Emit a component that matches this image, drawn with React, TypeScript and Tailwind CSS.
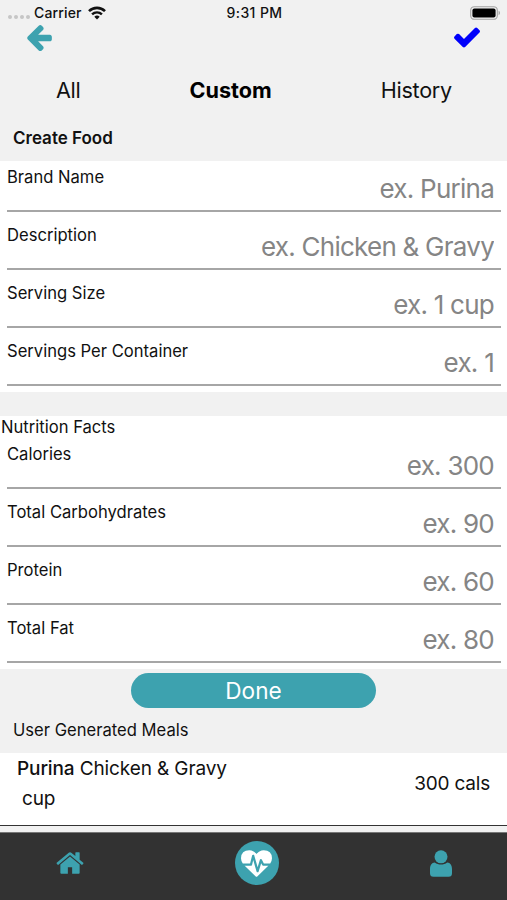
interface Field {
  label: string;
  placeholder: string;
  raised?: boolean;
}

const foodFields: Field[] = [
  { label: "Brand Name", placeholder: "ex. Purina", raised: true },
  { label: "Description", placeholder: "ex. Chicken & Gravy" },
  { label: "Serving Size", placeholder: "ex. 1 cup" },
  { label: "Servings Per Container", placeholder: "ex. 1" },
];

const nutritionFields: Field[] = [
  { label: "Calories", placeholder: "ex. 300", raised: true },
  { label: "Total Carbohydrates", placeholder: "ex. 90" },
  { label: "Protein", placeholder: "ex. 60" },
  { label: "Total Fat", placeholder: "ex. 80" },
];

const icons = {
  arrowLeft:
    "M1664 896v128q0 53-32.5 90.5t-84.5 37.5h-704l293 294q38 36 38 90t-38 90l-75 76q-37 37-90 37-52 0-91-37l-651-652q-37-37-37-90 0-52 37-91l651-650q38-38 91-38 52 0 90 38l75 74q38 38 38 91t-38 91l-293 293h704q52 0 84.5 37.5t32.5 90.5z",
  check:
    "M1671 566q0 40-28 68l-724 724-136 136q-28 28-68 28t-68-28l-136-136-362-362q-28-28-28-68t28-68l136-136q28-28 68-28t68 28l294 295 656-657q28-28 68-28t68 28l136 136q28 28 28 68z",
  home: "M1472 992v480q0 26-19 45t-45 19h-384v-384h-256v384h-384q-26 0-45-19t-19-45v-480q0-1 .5-3t.5-3l575-474 575 474q1 2 1 6zm223-69l-62 74q-8 9-21 11h-3q-13 0-21-7l-692-577-692 577q-12 8-24 7-13-2-21-11l-62-74q-8-10-7-23.5t11-21.5l719-599q32-26 76-26t76 26l244 204v-195q0-14 9-23t23-9h192q14 0 23 9t9 23v408l219 182q10 8 11 21.5t-7 23.5z",
  heartbeat:
    "M1280 1024h305q-5 6-10 10.5t-9 7.5l-3 4-623 600q-18 18-44 18t-44-18l-624-602q-5-2-21-20h369q22 0 39.5-13.5t22.5-34.5l70-281 190 667q6 20 23 33t39 13q21 0 38-13t23-33l146-485 56 112q18 35 57 35zm512-428q0 145-103 300h-369l-111-221q-8-17-25.5-27t-36.5-8q-45 5-56 46l-129 430-196-686q-6-20-23.5-33t-39.5-13-39 13.5-22 34.5l-116 464h-423q-103-155-103-300 0-220 127-344t351-124q62 0 126.5 21.5t120 58 95.5 68.5 76 68q36-36 76-68t95.5-68.5 120-58 126.5-21.5q224 0 351 124t127 344z",
};

function Icon({ name, className }: { name: keyof typeof icons; className: string }) {
  return (
    <svg viewBox="0 0 1792 1792" fill="currentColor" className={className}>
      <path d={icons[name]} />
    </svg>
  );
}

function UserIcon({ className }: { className: string }) {
  return (
    <svg viewBox="0 0 22 27" fill="currentColor" className={className}>
      <circle cx="11" cy="6.8" r="6.5" />
      <path d="M4.8 12.4c3.6 2.8 8.8 2.8 12.4 0 3.2.2 4.8 3 4.8 6.6v4.3q0 3.5-3.500 3.500h-15q-3.500 0-3.500-3.500V19c0-3.600 1.600-6.400 4.800-6.600z" />
    </svg>
  );
}

function StatusBar() {
  return (
    <div className="grid grid-cols-3 items-center h-[26px] pl-2 pr-[6px] text-[14px] font-medium">
      <div className="flex items-center">
        <div className="flex gap-[2px] mt-2 mr-1">
          {[0, 1, 2, 3].map((dot) => (
            <span key={dot} className="w-[4px] h-[4px] rounded-full bg-[#c6c6c6]" />
          ))}
        </div>
        <span className="-mt-[2px] tracking-[0.15px]">Carrier</span>
        <svg viewBox="0 0 18 14" className="w-[18px] h-[14px] ml-[6px]" fill="none" stroke="currentColor">
          <path d="M1 5.1a11.5 11.5 0 0 1 16 0" strokeWidth="2.6" />
          <path d="M4.1 8.4a7 7 0 0 1 9.8 0" strokeWidth="2.4" />
          <path d="M9 13.6 6.3 10.8a3.8 3.8 0 0 1 5.4 0z" fill="currentColor" stroke="none" />
        </svg>
      </div>
      <span className="-mt-[2px] text-center tracking-[0.4px]">9:31 PM</span>
      <svg viewBox="0 0 31 14" className="w-[31px] h-[14px] justify-self-end">
        <rect x="0.7" y="0.7" width="26.6" height="12.6" rx="3.6" fill="none" stroke="#a3a3a3" strokeWidth="1.1" />
        <rect x="2.4" y="2.4" width="23.2" height="9.2" rx="2" />
        <path d="M28.6 4.8v4.4q1.4-.6 1.4-2.2t-1.4-2.2z" fill="#a3a3a3" />
      </svg>
    </div>
  );
}

function FieldRow({ label, placeholder, raised }: Field) {
  return (
    <label className="flex justify-between h-[51.4px] ml-[7px] mr-[6px] mb-[6.45px] border-b-2 border-[#a6a6a6]">
      <span className="mt-[6.4px] text-[16.6px] leading-5">{label}</span>
      <input
        placeholder={placeholder}
        className={`w-[280px] h-8 pr-[7px] text-right text-[26px] tracking-[-0.75px] outline-none placeholder:text-[#858585] ${raised ? "mt-[11px]" : "mt-[12px]"}`}
      />
    </label>
  );
}

export default function App() {
  return (
    <div className="flex flex-col w-[507px] h-[900px] overflow-hidden bg-[#f1f1f1] font-['Inter',sans-serif] text-[#111]">
      <StatusBar />
      <header className="flex justify-between h-[38px] pl-[24px] pr-[25px]">
        <Icon name="arrowLeft" className="w-[30px] h-[30px] -mt-[4px] text-[#3da2af]" />
        <Icon name="check" className="w-[30px] h-[30px] -mt-[4px] text-[#0000fb]" />
      </header>
      <nav className="flex justify-between h-[53px] pt-[12px] pl-[56px] pr-[55px] text-[21.6px] leading-7">
        <span className="tracking-[-0.3px]">All</span>
        <span className="font-bold text-black">Custom</span>
        <span className="tracking-[-0.25px]">History</span>
      </nav>
      <h2 className="h-[44px] pt-[11px] pl-[13px] text-[17px] leading-5 font-semibold">Create Food</h2>

      <section className="h-[231px] bg-white">
        {foodFields.map((field) => (
          <FieldRow key={field.label} {...field} />
        ))}
      </section>

      <section className="h-[253px] mt-6 bg-white">
        <h3 className="h-[22px] pl-px text-[16.6px] leading-[22px]">Nutrition Facts</h3>
        {nutritionFields.map((field) => (
          <FieldRow key={field.label} {...field} />
        ))}
      </section>

      <div className="h-[84px] pt-[4px]">
        <button className="block w-[245px] h-[35px] ml-[131px] pt-px rounded-full bg-[#3da2af] text-[22.6px] leading-[34px] text-white">
          Done
        </button>
        <h3 className="mt-[12px] pl-[13px] text-[16.6px] leading-5">User Generated Meals</h3>
      </div>

      <article className="flex justify-between h-[73px] px-[17px] bg-white border-b border-[#333] text-[19px] tracking-[-0.12px]">
        <div>
          <p className="mt-[1px] leading-[30px]">
            <span className="font-medium">Purina</span> Chicken &amp; Gravy
          </p>
          <p className="pl-[5px] leading-[30px]">cup</p>
        </div>
        <span className="mt-[16px] leading-[30px] tracking-[-0.2px]">300 cals</span>
      </article>

      <footer className="flex items-start justify-between h-[68px] mt-[6px] pl-[55px] pr-[55px] bg-[#323232] border-t border-[#777] text-[#3da2af]">
        <Icon name="home" className="w-[30px] h-[30px] mt-[15px]" />
        <span className="flex items-center justify-center w-[44px] h-[44px] mt-[8px] ml-[-2px] rounded-full bg-[#3da2af] text-white">
          <Icon name="heartbeat" className="w-[31px] h-[31px]" />
        </span>
        <UserIcon className="w-[22px] h-[27px] mt-[17px]" />
      </footer>
    </div>
  );
}
